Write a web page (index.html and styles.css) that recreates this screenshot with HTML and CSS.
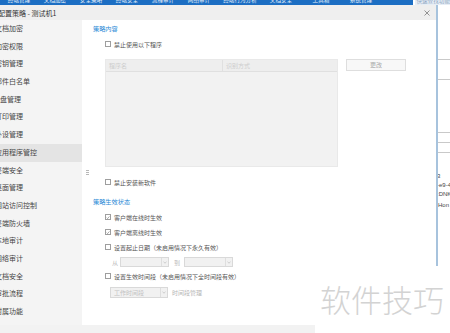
FILE: index.html
```html
<!DOCTYPE html>
<html lang="zh-CN">
<head>
<meta charset="utf-8">
<title>配置策略 - 测试机1</title>
<link rel="stylesheet" href="styles.css">
</head>
<body>
<div class="screen">
  <div class="topbar">
    <div class="nav">
      <span class="nav-item s36">终端管理</span>
      <span class="nav-item s36">文档加密</span>
      <span class="nav-item s36">安全策略</span>
      <span class="nav-item s36">终端安全</span>
      <span class="nav-item s36">流程审计</span>
      <span class="nav-item s36">网络审计</span>
      <span class="nav-item s46">终端行为分析</span>
      <span class="nav-item s36">文档安全</span>
      <span class="nav-item s44">工具箱</span>
      <span class="nav-item s36">系统管理</span>
    </div>
    <div class="search">快速查找功能</div>
  </div>

  <div class="main">
    <div class="dialog">
      <div class="dlg-header">
        <span class="dlg-title">配置策略 - 测试机1</span>
        <svg class="dlg-close" width="6" height="6" viewBox="0 0 6 6"><path d="M0.5 0.5 L5.5 5.5 M5.5 0.5 L0.5 5.5" stroke="#7a7a7a" stroke-width="0.8" fill="none"/></svg>
      </div>
      <div class="dlg-body">
        <ul class="sidebar">
          <li class="side-item">文档加密</li>
          <li class="side-item">加密权限</li>
          <li class="side-item">密钥管理</li>
          <li class="side-item">邮件白名单</li>
          <li class="side-item">U盘管理</li>
          <li class="side-item">打印管理</li>
          <li class="side-item">外设管理</li>
          <li class="side-item active">应用程序管控</li>
          <li class="side-item">终端安全</li>
          <li class="side-item">桌面管理</li>
          <li class="side-item">网站访问控制</li>
          <li class="side-item">终端防火墙</li>
          <li class="side-item">本地审计</li>
          <li class="side-item">网络审计</li>
          <li class="side-item">文档安全</li>
          <li class="side-item">审批流程</li>
          <li class="side-item">附属功能</li>
        </ul>
        <div class="splitter"><div class="grip"><i></i><i></i><i></i></div></div>
        <div class="content">
          <div class="section-title">策略内容</div>
          <label class="cb-row"><span class="cb"></span><span>禁止使用以下程序</span></label>
          <div class="list-row">
            <div class="list">
              <div class="list-head"><span class="col1">程序名</span><span class="col2">识别方式</span></div>
            </div>
            <div class="btn">更改</div>
          </div>
          <label class="cb-row gap10"><span class="cb"></span><span>禁止安装新软件</span></label>
          <div class="section-title gap10">策略生效状态</div>
          <label class="cb-row"><span class="cb"><svg width="5" height="5" viewBox="0 0 5 5"><path d="M0.8 2.6 L2 3.8 L4.3 1.1" stroke="#666" stroke-width="0.7" fill="none"/></svg></span><span>客户端在线时生效</span></label>
          <label class="cb-row"><span class="cb"><svg width="5" height="5" viewBox="0 0 5 5"><path d="M0.8 2.6 L2 3.8 L4.3 1.1" stroke="#666" stroke-width="0.7" fill="none"/></svg></span><span>客户端离线时生效</span></label>
          <label class="cb-row"><span class="cb"></span><span>设置起止日期（未启用情况下永久有效）</span></label>
          <div class="date-row">
            <span class="muted">从</span>
            <div class="select w49"><span class="val"></span><span class="arrow"><svg width="4" height="3" viewBox="0 0 4 3"><path d="M0.5 0.8 L2 2.2 L3.5 0.8" stroke="#b5b5b5" stroke-width="0.6" fill="none"/></svg></span></div>
            <span class="muted to">到</span>
            <div class="select w49"><span class="val"></span><span class="arrow"><svg width="4" height="3" viewBox="0 0 4 3"><path d="M0.5 0.8 L2 2.2 L3.5 0.8" stroke="#b5b5b5" stroke-width="0.6" fill="none"/></svg></span></div>
          </div>
          <label class="cb-row gap4"><span class="cb"></span><span>设置生效时间段（未启用情况下全时间段有效）</span></label>
          <div class="time-row">
            <div class="select w58 h11"><span class="val">工作时间段</span><span class="arrow"><svg width="4" height="3" viewBox="0 0 4 3"><path d="M0.5 0.8 L2 2.2 L3.5 0.8" stroke="#b5b5b5" stroke-width="0.6" fill="none"/></svg></span></div>
            <span class="muted link">时间段管理</span>
          </div>
        </div>
      </div>
      <div class="dlg-footer"></div>
    </div>

    <div class="bgwin">
      <div class="bg-line m54"></div>
      <div class="bg-line m19"></div>
      <div class="bg-line m52"></div>
      <div class="bg-line m9"></div>
      <div class="bg-line m9"></div>
      <div class="bg-text">
        <div>3</div>
        <div>-e9-4</div>
        <div>:DNK</div>
        <div class="hon">Hon</div>
      </div>
    </div>
  </div>

  <div class="watermark">软件技巧</div>
</div>
</body>
</html>
```

FILE: styles.css
```css
* { box-sizing: border-box; }
html, body { margin: 0; padding: 0; }
body {
  width: 450px;
  height: 333px;
  overflow: hidden;
  background: #fff;
  font-family: "Noto Sans CJK SC", "Noto Sans", sans-serif;
}
.screen {
  position: relative;
  width: 450px;
  height: 333px;
  overflow: hidden;
}

/* top bar */
.topbar {
  display: flex;
  height: 5px;
  overflow: hidden;
}
.nav {
  width: 415px;
  display: flex;
  padding-left: 1px;
  background: #1c6ec3;
}
.nav-item {
  flex: none;
  text-align: center;
  color: #e6f0fb;
  font-size: 5.6px;
  line-height: 8px;
  margin-top: -4px;
  white-space: nowrap;
}
.s36 { width: 36px; }
.s46 { width: 46px; }
.s44 { width: 44px; }
.search {
  flex: 1;
  margin-left: 2px;
  background: #e6edf5;
  color: #8ea7c2;
  font-size: 5.6px;
  line-height: 8px;
  padding-left: 1px;
  margin-top: -3px;
  height: 8px;
  white-space: nowrap;
}

/* main */
.main {
  display: flex;
  height: 328px;
}
.dialog {
  width: 438px;
  display: flex;
  flex-direction: column;
  border-right: 2px solid #a7c3dd;
  background: #fff;
}
.dlg-header {
  height: 15px;
  background: #efefef;
  display: flex;
  align-items: center;
  justify-content: space-between;
  padding-right: 6px;
}
.dlg-title {
  margin-left: -2px;
  font-size: 7px;
  color: #333;
  white-space: nowrap;
}
.dlg-close { display: block; }

.dlg-body {
  height: 305px;
  display: flex;
}
.dlg-footer {
  height: 8px;
  background: #f2f2f2;
}

/* sidebar */
.sidebar {
  list-style: none;
  margin: 0;
  padding: 0;
  width: 82px;
  background: #f4f4f4;
}
.side-item {
  height: 17.7px;
  line-height: 17.7px;
  font-size: 7px;
  color: #444;
  text-indent: -5px;
  white-space: nowrap;
}
.side-item.active {
  background: #e4e4e4;
}

.splitter {
  width: 8px;
  display: flex;
  align-items: center;
}
.grip {
  margin-left: 4px;
  display: flex;
  flex-direction: column;
  gap: 1px;
}
.grip i {
  display: block;
  width: 3px;
  height: 1px;
  background: #b8b8b8;
}

/* content */
.content {
  flex: 1;
  display: flex;
  flex-direction: column;
  padding-left: 3px;
  font-size: 6px;
  color: #555;
}
.section-title {
  margin-top: 4px;
  height: 10px;
  line-height: 10px;
  color: #2a8ad6;
  font-size: 6.2px;
}
.cb-row {
  display: flex;
  align-items: center;
  gap: 3px;
  height: 10px;
  margin-top: 5px;
  padding-left: 12px;
  white-space: nowrap;
}
.gap10 { margin-top: 10px; }
.gap4 { margin-top: 4px; }
.cb {
  width: 6px;
  height: 6px;
  border: 1px solid #9e9e9e;
  background: #fff;
  display: flex;
  align-items: center;
  justify-content: center;
  flex: none;
}
.cb svg { display: block; }

.list-row {
  display: flex;
  margin-top: 10px;
  padding-left: 12px;
  height: 108px;
}
.list {
  width: 233px;
  height: 108px;
  background: #f2f2f2;
  border: 1px solid #e9e9e9;
}
.list-head {
  display: flex;
  height: 12px;
  line-height: 11px;
  background: #eeeeee;
  border-bottom: 1px solid #e0e0e0;
  color: #cdcdcd;
}
.col1 {
  width: 117px;
  padding-left: 3px;
  border-right: 1px solid #e0e0e0;
}
.col2 { padding-left: 3px; }
.btn {
  margin-left: 8px;
  width: 60px;
  height: 12px;
  border: 1px solid #dedede;
  background: #f8f8f8;
  color: #a8a8a8;
  text-align: center;
  line-height: 10px;
}

.muted { color: #b9b9b9; }
.date-row {
  display: flex;
  align-items: center;
  height: 10px;
  margin-top: 5px;
  padding-left: 19px;
  gap: 2px;
}
.date-row .to { margin-left: 3px; margin-right: 2px; }
.select {
  display: flex;
  height: 10px;
  border: 1px solid #d9d9d9;
  background: #f1f1f1;
}
.w49 { width: 49px; }
.w58 { width: 58px; }
.h11 { height: 11px; }
.select .val {
  flex: 1;
  padding-left: 3px;
  color: #c2c2c2;
  font-size: 6px;
  line-height: 9px;
  white-space: nowrap;
}
.select .arrow {
  width: 7px;
  border-left: 1px solid #dedede;
  display: flex;
  align-items: center;
  justify-content: center;
}
.select .arrow svg { display: block; }
.time-row {
  display: flex;
  align-items: center;
  margin-top: 6px;
  padding-left: 17px;
  gap: 4px;
}
.link { color: #b5b5b5; }

/* background window on the right */
.bgwin {
  flex: 1;
  display: flex;
  flex-direction: column;
  background: #fff;
  overflow: hidden;
}
.bg-line {
  height: 1px;
  background: #c9c9c9;
  flex: none;
}
.m54 { margin-top: 54px; }
.m19 { margin-top: 19px; }
.m52 { margin-top: 52px; }
.m9 { margin-top: 9px; }
.bg-text {
  margin-top: 19px;
  font-family: "Liberation Sans", Arial, sans-serif;
  font-size: 6px;
  line-height: 9px;
  color: #444;
  white-space: nowrap;
  margin-left: -1px;
}
.bg-text .hon { margin-top: 2px; padding-left: 1px; }

/* watermark overlay */
.watermark {
  position: absolute;
  right: 0;
  bottom: 0;
  width: 135px;
  height: 67px;
  background: #fff;
  padding-top: 17px;
  padding-left: 5px;
  font-size: 31px;
  line-height: 31px;
  color: #d3d3d3;
  white-space: nowrap;
  font-weight: 300;
}
```
